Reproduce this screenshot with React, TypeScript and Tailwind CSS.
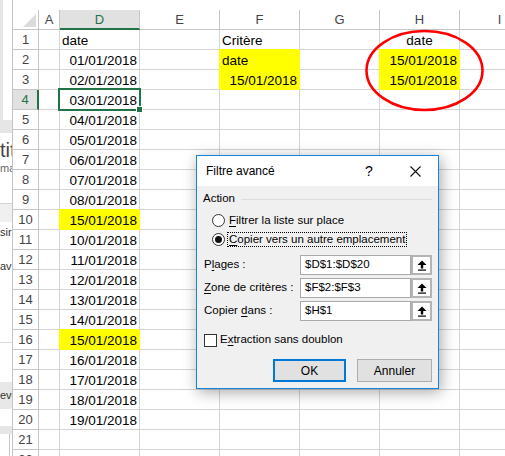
import React from 'react'

type Align = 'left' | 'right' | 'center'

interface Cell {
  text: string
  align: Align
  fill?: boolean
}

type ColKey = 'A' | 'D' | 'E' | 'F' | 'G' | 'H' | 'I'

const columns: { key: ColKey; width: string }[] = [
  { key: 'A', width: 'w-[21px]' },
  { key: 'D', width: 'w-[80px]' },
  { key: 'E', width: 'w-[80px]' },
  { key: 'F', width: 'w-[80px]' },
  { key: 'G', width: 'w-[80px]' },
  { key: 'H', width: 'w-[80px]' },
  { key: 'I', width: 'w-[80px]' },
]

const dates = [
  '01/01/2018',
  '02/01/2018',
  '03/01/2018',
  '04/01/2018',
  '05/01/2018',
  '06/01/2018',
  '07/01/2018',
  '08/01/2018',
  '15/01/2018',
  '10/01/2018',
  '11/01/2018',
  '12/01/2018',
  '13/01/2018',
  '14/01/2018',
  '15/01/2018',
  '16/01/2018',
  '17/01/2018',
  '18/01/2018',
  '19/01/2018',
]

// sheet contents, row number -> cells
const sheet: Record<number, Partial<Record<ColKey, Cell>>> = {
  1: {
    D: { text: 'date', align: 'left' },
    F: { text: 'Critère', align: 'left' },
    H: { text: 'date', align: 'center' },
  },
  2: {
    F: { text: 'date', align: 'left', fill: true },
    H: { text: '15/01/2018', align: 'right', fill: true },
  },
  3: {
    F: { text: '15/01/2018', align: 'right', fill: true },
    H: { text: '15/01/2018', align: 'right', fill: true },
  },
}

dates.forEach((d, i) => {
  const row = i + 2
  sheet[row] = {
    ...sheet[row],
    D: { text: d, align: 'right', fill: row === 10 || row === 16 },
  }
})

const rows = Array.from({ length: 22 }, (_, i) => i + 1)

const SheetCell: React.FC<{ width: string; cell?: Cell; selected?: boolean }> = ({
  width,
  cell,
  selected,
}) => {
  const align =
    cell?.align === 'right'
      ? 'justify-end pr-[2px]'
      : cell?.align === 'center'
        ? 'justify-center'
        : 'justify-start pl-[2px]'

  return (
    <div
      className={`relative flex h-full shrink-0 items-end whitespace-nowrap border-r border-b leading-[16px] ${width} ${align} ${
        cell?.fill
          ? 'border-[#ffff00] bg-[#ffff00] shadow-[-1px_-1px_0_#ffff00]'
          : 'border-[#d4d4d4]'
      }`}
    >
      {cell?.text}
      {selected && (
        <div className="absolute -top-[2px] -right-[2px] -bottom-[2px] -left-[2px] z-10 border-2 border-[#217346]">
          <div className="absolute -right-[4px] -bottom-[4px] h-[7px] w-[7px] border border-white bg-[#217346]" />
        </div>
      )}
    </div>
  )
}

const LeftStrip: React.FC = () => (
  <div className="flex h-full w-[13px] shrink-0 flex-col overflow-hidden border-r border-[#c4c4c4] bg-white">
    <div className="h-[120px] shrink-0 border-l-[3px] border-[#e6e6e6]" />
    <div className="h-[13px] shrink-0 bg-[#e6e6e6]" />
    <div className="h-[70px] shrink-0 whitespace-nowrap">
      <div className="mt-[6px] text-[20px] leading-[22px] text-[#444]">titl</div>
      <div className="mt-[1px] text-[11px] leading-[13px] text-[#666]">ma</div>
    </div>
    <div className="h-px shrink-0 bg-[#d4d4d4]" />
    <div className="h-[18px] shrink-0 bg-[#f0f0f0]" />
    <div className="h-[120px] shrink-0 whitespace-nowrap text-[11px] leading-[13px] text-[#333]">
      <div className="mt-[4px]">sir</div>
      <div className="mt-[21px]">av</div>
    </div>
    <div className="h-px shrink-0 bg-[#dcdcdc]" />
    <div className="h-[39px] shrink-0" />
    <div className="flex h-[27px] shrink-0 items-center whitespace-nowrap bg-[#e8e8e8] text-[11px] text-[#333]">
      evo
    </div>
    <div className="h-[17px] shrink-0" />
    <div className="h-[8px] shrink-0 bg-[#e6e6e6]" />
    <div className="flex-1 border-l border-[#c8c8c8] ml-[9px]" />
  </div>
)

const RefButton: React.FC = () => (
  <div className="flex h-full w-[21px] shrink-0 items-center justify-center border-2 border-[#b4b4b4] bg-white">
    <svg width="10" height="11" viewBox="0 0 10 11">
      <polygon points="0.5,5 5,0.5 9.5,5" fill="#000" />
      <rect x="3.8" y="4.5" width="2.4" height="4" fill="#000" />
      <rect x="1" y="9.5" width="8" height="1.2" fill="#000" />
    </svg>
  </div>
)

const Field: React.FC<{ label: React.ReactNode; value: string }> = ({ label, value }) => (
  <div className="flex h-[20px] items-center">
    <div className="w-[97px] shrink-0 pl-[1px]">{label}</div>
    <div className="flex h-full flex-1 items-center border border-[#a9a9a9] bg-white pl-[4px]">
      {value}
    </div>
    <RefButton />
  </div>
)

const Radio: React.FC<{ checked?: boolean }> = ({ checked }) => (
  <div className="ml-[9px] flex h-[13px] w-[13px] shrink-0 items-center justify-center rounded-full border border-[#333] bg-white">
    {checked && <div className="h-[7px] w-[7px] rounded-full bg-[#111]" />}
  </div>
)

const Dialog: React.FC = () => (
  <div className="absolute top-[155px] left-[196px] flex h-[234px] w-[243px] flex-col border border-[#1883d7] bg-[#f0f0f0] font-['Liberation_Sans',Arial,sans-serif] text-[11.5px] text-black shadow-[2px_3px_14px_rgba(0,0,0,0.35)]">
    <div className="flex h-[30px] shrink-0 items-center bg-white pl-[9px]">
      <span className="text-[12px]">Filtre avancé</span>
      <span className="ml-auto flex w-[46px] justify-center text-[14px]">?</span>
      <span className="flex w-[46px] justify-center">
        <svg width="11" height="11" viewBox="0 0 11 11">
          <path d="M0.5 0.5 L10.5 10.5 M10.5 0.5 L0.5 10.5" stroke="#111" strokeWidth="1.1" />
        </svg>
      </span>
    </div>

    <div className="flex flex-1 flex-col pt-[5px] pr-[6px] pl-[6px]">
      <div className="flex h-[16px] items-center">
        <span>Action</span>
        <div className="ml-[6px] h-px flex-1 bg-[#dcdcdc]" />
      </div>

      <div className="mt-[4px] flex h-[19px] items-center">
        <Radio />
        <span className="ml-[2px] border border-transparent px-[1px] leading-[13px]">
          <u className="underline-offset-2">F</u>iltrer la liste sur place
        </span>
      </div>
      <div className="flex h-[19px] items-center">
        <Radio checked />
        <span className="ml-[2px] border border-dotted border-black px-[1px] leading-[13px]">
          <u className="underline-offset-2">C</u>opier vers un autre emplacement
        </span>
      </div>

      <div className="mt-[6px] flex flex-col gap-[3px]">
        <Field
          label={
            <>
              P<u className="underline-offset-2">l</u>ages :
            </>
          }
          value="$D$1:$D$20"
        />
        <Field
          label={
            <>
              <u className="underline-offset-2">Z</u>one de critères :
            </>
          }
          value="$F$2:$F$3"
        />
        <Field
          label={
            <>
              Copier <u className="underline-offset-2">d</u>ans :
            </>
          }
          value="$H$1"
        />
      </div>

      <div className="mt-[11px] flex h-[16px] items-center">
        <div className="ml-[1px] h-[13px] w-[13px] border border-[#333] bg-white" />
        <span className="ml-[3px]">
          E<u className="underline-offset-2">x</u>traction sans doublon
        </span>
      </div>

      <div className="mt-[11px] flex h-[23px] justify-end gap-[11px]">
        <button className="flex w-[73px] items-center justify-center border-2 border-[#0078d7] bg-[#e1e1e1] text-[12px]">
          OK
        </button>
        <button className="flex w-[75px] items-center justify-center border border-[#adadad] bg-[#e1e1e1] text-[12px]">
          Annuler
        </button>
      </div>
    </div>
  </div>
)

const App: React.FC = () => {
  return (
    <div className="relative flex h-[456px] w-[505px] overflow-hidden bg-white font-['Liberation_Sans',Arial,sans-serif] text-[13.5px] text-black">
      <LeftStrip />

      <div className="flex min-w-0 flex-1 flex-col">
        <div className="h-[10px] shrink-0" />

        {/* column headers */}
        <div className="flex h-[20px] shrink-0">
          <div className="relative h-full w-[26px] shrink-0 border-r border-b border-[#c6c6c6]">
            <svg className="absolute right-[2px] bottom-[2px]" width="13" height="13" viewBox="0 0 13 13">
              <polygon points="13,0 13,13 0,13" fill="#dcdcdc" />
            </svg>
          </div>
          {columns.map((c) =>
            c.key === 'D' ? (
              <div
                key={c.key}
                className={`flex h-full shrink-0 items-center justify-center border-r border-b-2 border-r-[#c6c6c6] border-b-[#217346] bg-[#e1e1e1] pt-[1px] text-[13px] leading-[16px] text-[#217346] ${c.width}`}
              >
                {c.key}
              </div>
            ) : (
              <div
                key={c.key}
                className={`flex h-full shrink-0 items-center justify-center border-r border-b border-[#c6c6c6] text-[13px] leading-[16px] text-[#444] ${c.width}`}
              >
                {c.key}
              </div>
            )
          )}
        </div>

        {rows.map((r) => (
          <div key={r} className="flex h-[20px] shrink-0">
            <div
              className={`flex h-full w-[26px] shrink-0 items-center justify-center border-b text-[13px] leading-[16px] ${
                r === 4
                  ? 'border-r-2 border-r-[#217346] border-b-[#c6c6c6] bg-[#e1e1e1] text-[#217346]'
                  : 'border-r border-[#c6c6c6] text-[#444]'
              }`}
            >
              {r}
            </div>
            {columns.map((c) => (
              <SheetCell
                key={c.key}
                width={c.width}
                cell={sheet[r]?.[c.key]}
                selected={r === 4 && c.key === 'D'}
              />
            ))}
          </div>
        ))}
      </div>

      <svg className="pointer-events-none absolute top-0 left-0" width="505" height="456">
        <ellipse cx="424.5" cy="70.5" rx="58" ry="39.5" fill="none" stroke="#ff0000" strokeWidth="2.6" />
      </svg>

      <Dialog />
    </div>
  )
}

export default App
